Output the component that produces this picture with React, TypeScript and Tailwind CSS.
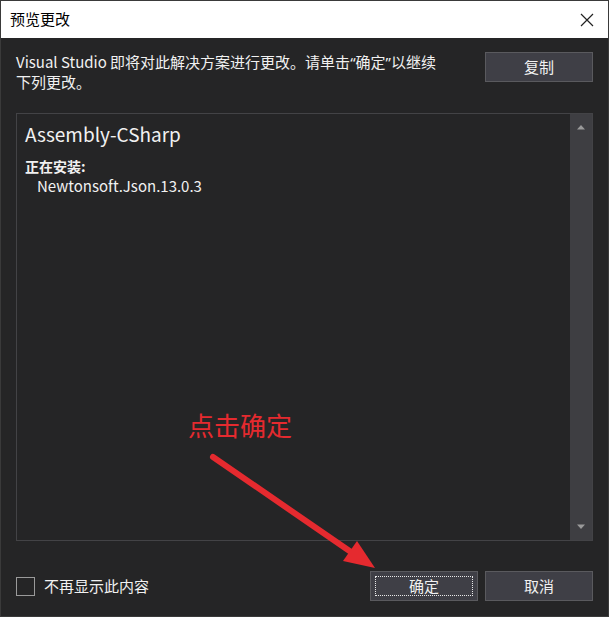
import React from "react"

const font = "font-['Noto_Sans_CJK_SC','Noto_Sans',sans-serif]"

interface DialogButtonType {
    label: string,
    focused?: boolean
}

const DialogButton = ({ label, focused }: DialogButtonType) => (
    <div className="w-[108px] h-[30px] p-[4px] bg-[#3f3f46] border border-[#5a5a5e] flex">
        <div
            className={
                focused
                    ? "flex-1 flex items-center justify-center border border-dotted border-[#e8e8e8] text-[15px] text-[#f1f1f1]"
                    : "flex-1 flex items-center justify-center border border-transparent text-[15px] text-[#f1f1f1]"
            }
        >
            {label}
        </div>
    </div>
)

const ScrollBar = () => (
    <div className="w-[22px] bg-[#3e3e42] flex flex-col items-center justify-between py-[10px]">
        <svg width="10" height="6" viewBox="0 0 10 6">
            <path d="M1 5.5 L5 1 L9 5.5 Z" fill="#9a9a9a" />
        </svg>
        <svg width="10" height="6" viewBox="0 0 10 6">
            <path d="M1 0.5 L5 5 L9 0.5 Z" fill="#9a9a9a" />
        </svg>
    </div>
)

const Arrow = () => (
    <svg className="absolute left-0 top-0 pointer-events-none" width="609" height="617" viewBox="0 0 609 617">
        <line x1="212" y1="456" x2="350" y2="551" stroke="#e52a2f" strokeWidth="6" strokeLinecap="round" />
        <path d="M374 567 L342 560 L356 540 Z" fill="#e52a2f" />
    </svg>
)

// narrow latin quotes, like the reference
const Q = ({ c }: { c: string }) => <span className="font-['Noto_Sans',sans-serif]">{c}</span>

export default function App() {
    return (
        <div className={`w-[609px] h-[617px] bg-[#252526] border border-[#3a3a3a] flex flex-col relative overflow-hidden ${font}`}>
            <div className="h-[37px] bg-white flex items-center justify-between pl-[9px] pr-[14px]">
                <span className="text-[15px] text-black">预览更改</span>
                <svg width="14" height="14" viewBox="0 0 14 14">
                    <path d="M1 1 L13 13 M13 1 L1 13" stroke="#222" strokeWidth="1.2" />
                </svg>
            </div>

            <div className="flex-1 flex flex-col px-[15px]">
                <div className="flex justify-between mt-[14px]">
                    <p className="text-[15px] leading-[20px] text-[#f1f1f1]">
                        Visual Studio 即将对此解决方案进行更改。请单击<Q c="“" />确定<Q c="”" />以继续
                        <br />
                        下列更改。
                    </p>
                    <DialogButton label="复制" />
                </div>

                <div className="mt-[21px] h-[428px] border border-[#434346] flex">
                    <div className="flex-1 pl-[8px] pt-[6px] text-[#f1f1f1]">
                        <div className="text-[19px] leading-[28px]">Assembly-CSharp</div>
                        <div className="mt-[9px] text-[14px] leading-[18px] font-bold">正在安装:</div>
                        <div className="pl-[12px] text-[15px] leading-[21px]">Newtonsoft.Json.13.0.3</div>
                    </div>
                    <ScrollBar />
                </div>

                <div className="mt-[30px] flex items-center justify-between">
                    <label className="flex items-center gap-[9px]">
                        <span className="w-[19px] h-[19px] border border-[#9a9a9a]" />
                        <span className="text-[15px] text-[#f1f1f1]">不再显示此内容</span>
                    </label>
                    <div className="flex gap-[7px]">
                        <DialogButton label="确定" focused />
                        <DialogButton label="取消" />
                    </div>
                </div>
            </div>

            <div className="absolute left-[187px] top-[405px] text-[26px] leading-[38px] text-[#e52a2f]">点击确定</div>
            <Arrow />
        </div>
    )
}
